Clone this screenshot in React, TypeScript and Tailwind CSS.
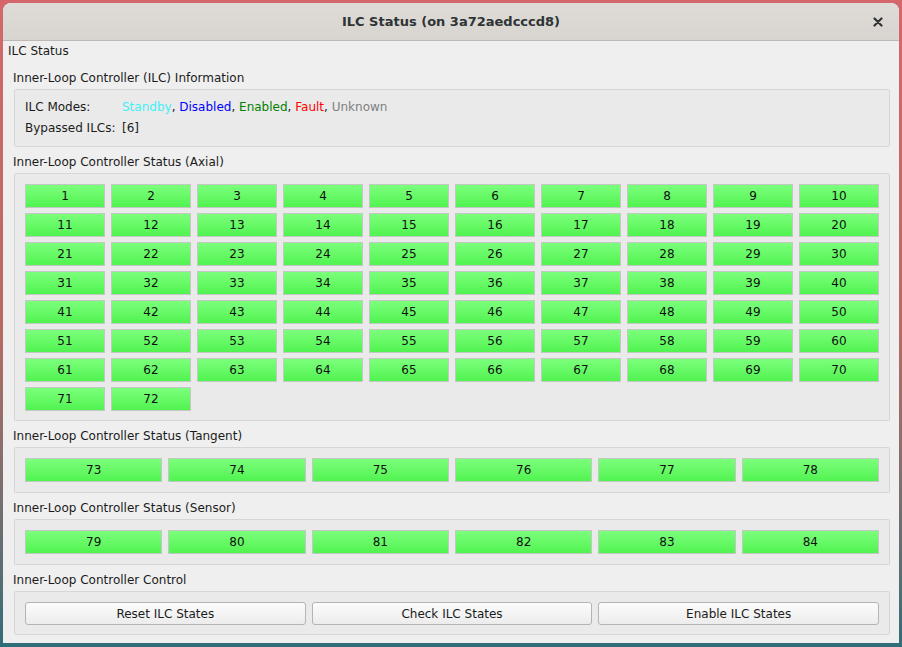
import React from "react";

const axial = Array.from({ length: 72 }, (_, i) => i + 1);
const tangent = [73, 74, 75, 76, 77, 78];
const sensor = [79, 80, 81, 82, 83, 84];

const IlcButton = ({ id }: { id: number }) => (
  <div className="h-[24px] flex items-center justify-center border border-[#c2c9c2] bg-gradient-to-b from-[#7cff7c] to-[#4ff34f] text-[#111]">
    {id}
  </div>
);

const GroupTitle = ({ children, first }: { children: React.ReactNode; first?: boolean }) => (
  <div className={`${first ? "pt-[11px]" : "pt-[7px]"} pl-[10px] h-[16px] leading-[16px] mb-[3px] box-content`}>
    {children}
  </div>
);

const GroupBox = ({ children, className = "" }: { children: React.ReactNode; className?: string }) => (
  <div className={`ml-[11px] mr-[9px] border border-[#d6d6d6] rounded-[2px] bg-[#eaeaea] px-[10px] ${className}`}>
    {children}
  </div>
);

export default function App() {
  return (
    <div className="w-[902px] h-[647px] bg-gradient-to-b from-[#d4676b] via-[#b86a62] to-[#2e6d78] pt-[3px] pl-[3px] pr-[3px] pb-[4px] font-['DejaVu_Sans',sans-serif] text-[12px] text-[#1b1b1b]">
      <div className="h-full flex flex-col bg-[#efefef] rounded-t-[8px] overflow-hidden">
        {/* title bar */}
        <div className="h-[38px] shrink-0 bg-gradient-to-b from-[#dfdcd8] to-[#d8d4d0] border-b border-[#bcb8b3] flex items-center relative">
          <div className="flex-1 text-center font-bold text-[13px] text-[#2e3436] pt-px">ILC Status (on 3a72aedcccd8)</div>
          <svg className="absolute right-[16px] top-[14px]" width="10" height="10" viewBox="0 0 10 10">
            <path d="M1.5 1.5 L8.5 8.5 M8.5 1.5 L1.5 8.5" stroke="#2e3436" strokeWidth="2.2" strokeLinecap="round" />
          </svg>
        </div>

        <div className="flex flex-col">
          <div className="pl-[5px] pt-[2px] h-[16px] leading-[16px] box-content">ILC Status</div>

          <GroupTitle first>Inner-Loop Controller (ILC) Information</GroupTitle>
          <GroupBox className="pt-[9px] pb-[10px] flex flex-col gap-[5px]">
            <div className="flex h-[16px] leading-[16px]">
              <span className="w-[97px]">ILC Modes:</span>
              <span>
                <span className="text-[#3ff0f6]">Standby</span>,{" "}
                <span className="text-[#0000ff]">Disabled</span>,{" "}
                <span className="text-[#008000]">Enabled</span>,{" "}
                <span className="text-[#ff0000]">Fault</span>,{" "}
                <span className="text-[#808080]">Unknown</span>
              </span>
            </div>
            <div className="flex h-[16px] leading-[16px]">
              <span className="w-[97px]">Bypassed ILCs:</span>
              <span>[6]</span>
            </div>
          </GroupBox>

          <GroupTitle>Inner-Loop Controller Status (Axial)</GroupTitle>
          <GroupBox className="pt-[10px] pb-[9px]">
            <div className="grid grid-cols-10 gap-x-[6px] gap-y-[5px]">
              {axial.map((n) => (
                <IlcButton key={n} id={n} />
              ))}
            </div>
          </GroupBox>

          <GroupTitle>Inner-Loop Controller Status (Tangent)</GroupTitle>
          <GroupBox className="py-[10px]">
            <div className="grid grid-cols-6 gap-x-[6px]">
              {tangent.map((n) => (
                <IlcButton key={n} id={n} />
              ))}
            </div>
          </GroupBox>

          <GroupTitle>Inner-Loop Controller Status (Sensor)</GroupTitle>
          <GroupBox className="py-[10px]">
            <div className="grid grid-cols-6 gap-x-[6px]">
              {sensor.map((n) => (
                <IlcButton key={n} id={n} />
              ))}
            </div>
          </GroupBox>

          <GroupTitle>Inner-Loop Controller Control</GroupTitle>
          <GroupBox className="pt-[10px] pb-[9px]">
            <div className="grid grid-cols-3 gap-x-[6px]">
              {["Reset ILC States", "Check ILC States", "Enable ILC States"].map((t) => (
                <div
                  key={t}
                  className="h-[23px] flex items-center justify-center rounded-[3px] border border-[#b4b4b4] bg-gradient-to-b from-[#fcfcfc] to-[#ececec]"
                >
                  {t}
                </div>
              ))}
            </div>
          </GroupBox>
        </div>
      </div>
    </div>
  );
}
